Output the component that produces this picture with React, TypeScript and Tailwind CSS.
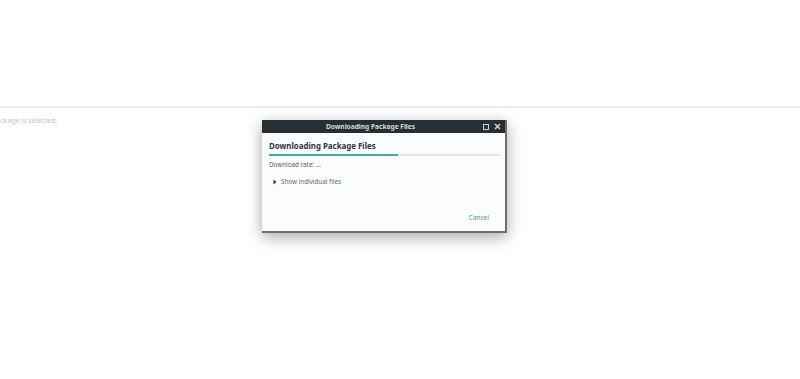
export default function App() {
  return (
    <div
      className="relative h-[379px] w-[800px] overflow-hidden bg-white"
      style={{ fontFamily: '"Noto Sans", "Open Sans", sans-serif' }}
    >
      <div className="h-[106px]" />
      <div className="h-[2px] bg-[#ececec]" />
      <div className="-ml-[8px] pt-[8px] text-[7px] leading-[10px] text-[#c4c4c4]">
        package is selected.
      </div>

      <div className="absolute left-[262px] top-[120px] flex h-[113px] w-[245px] flex-col border-r-2 border-b-2 border-r-[#6d6f70] border-b-[#6d6f70] bg-[#fbfcfd] shadow-[0_4px_14px_rgba(0,0,0,0.35)]">
        <div className="relative flex h-[13px] items-center justify-center bg-[#263034] pr-[26px]">
          <span className="text-[6.6px] font-bold text-[#d6dadb]">Downloading Package Files</span>
          <div className="absolute right-[4px] top-0 flex h-full items-center gap-[5px]">
            <div className="h-[6px] w-[6px] border-[1.5px] border-[#cfd3d4]" />
            <svg width="7" height="7" viewBox="0 0 7 7">
              <path d="M1 1L6 6M6 1L1 6" stroke="#cfd3d4" strokeWidth="1.5" />
            </svg>
          </div>
        </div>
        <div className="flex flex-1 flex-col px-[7px]">
          <div className="mt-[8px] text-[7.9px] font-bold leading-[11px] text-[#31363b]">
            Downloading Package Files
          </div>
          <div className="mt-[2px] flex h-[2px] w-[231px] bg-[#dde7e6]">
            <div className="h-full w-[129px] bg-[#3daf98]" />
          </div>
          <div className="mt-[4px] text-[6.3px] leading-[10px] text-[#5a5a5a]">Download rate: ...</div>
          <div className="mt-[7px] flex items-center gap-[4px] pl-[4px] text-[6.3px] leading-[10px] text-[#666]">
            <svg width="4" height="6" viewBox="0 0 4 6">
              <path d="M0.5 0.5L3.5 3L0.5 5.5Z" fill="#333" />
            </svg>
            <span>Show individual files</span>
          </div>
          <div className="mt-auto mb-[8px] flex justify-end pr-[9px]">
            <span className="text-[6.6px] text-[#46a590]">Cancel</span>
          </div>
        </div>
      </div>
    </div>
  );
}
